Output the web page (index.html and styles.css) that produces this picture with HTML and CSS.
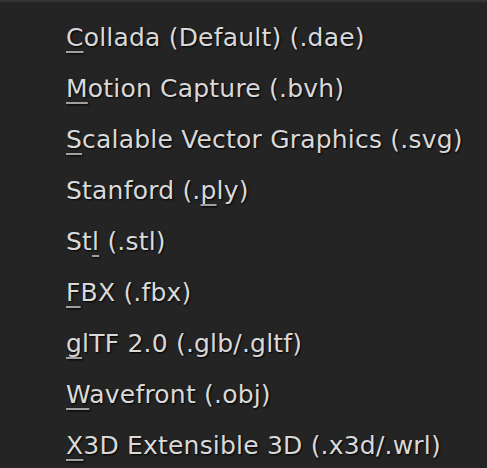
FILE: index.html
```html
<!DOCTYPE html>
<html>
<head>
<meta charset="utf-8">
<link rel="stylesheet" href="styles.css">
</head>
<body>
<div class="menu">
  <div class="item"><span class="key">C</span>ollada (Default) (.dae)</div>
  <div class="item"><span class="key">M</span>otion Capture (.bvh)</div>
  <div class="item"><span class="key">S</span>calable Vector Graphics (.svg)</div>
  <div class="item">Stanford (.<span class="key">p</span>ly)</div>
  <div class="item">St<span class="key">l</span> (.stl)</div>
  <div class="item"><span class="key">F</span>BX (.fbx)</div>
  <div class="item"><span class="key">g</span>lTF 2.0 (.glb/.gltf)</div>
  <div class="item"><span class="key">W</span>avefront (.obj)</div>
  <div class="item"><span class="key">X</span>3D Extensible 3D (.x3d/.wrl)</div>
</div>
</body>
</html>
```
FILE: styles.css
```css
html, body {
  margin: 0;
  padding: 0;
  background: #242424;
  height: 100%;
  overflow: hidden;
}
.menu {
  border-top: 2px solid #343434;
  padding: 10px 0 0 66px;
  display: flex;
  flex-direction: column;
  font-family: "DejaVu Sans", sans-serif;
  font-size: 25px;
  letter-spacing: 0.2px;
  line-height: 51px;
  color: #d9d9d9;
  text-shadow: 1px 1px 2px #000;
}
.item {
  white-space: nowrap;
  height: 51px;
}
.key {
  text-decoration: underline;
  text-decoration-color: #a0a0a0;
  text-decoration-thickness: 2px;
  text-underline-offset: 5px;
}
```
